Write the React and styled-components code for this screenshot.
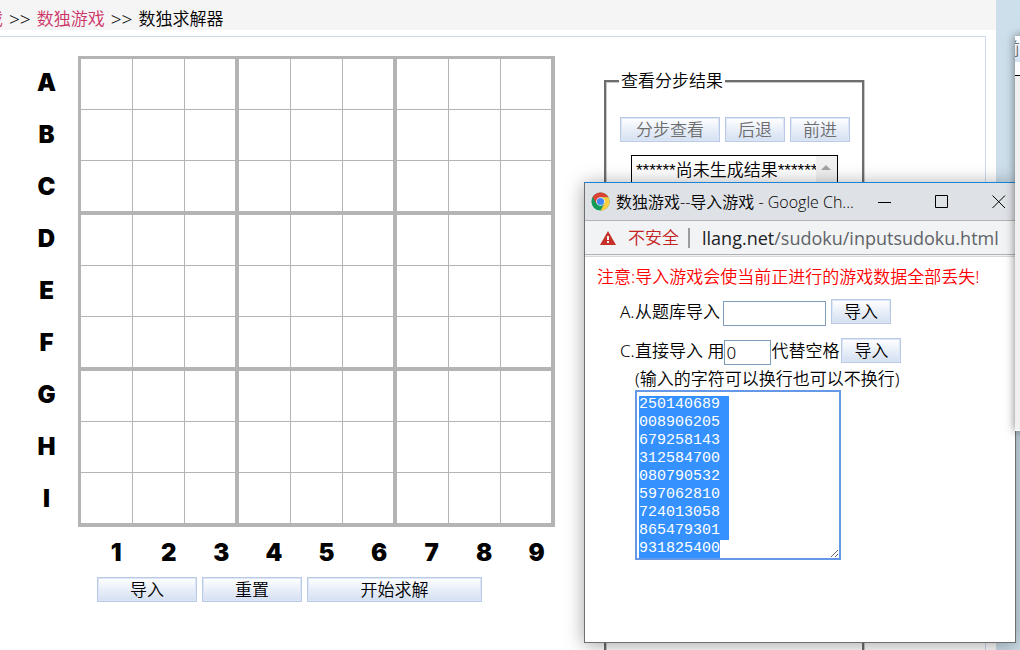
import React, { useEffect, useRef } from "react";
import styled, { createGlobalStyle } from "styled-components";

const GlobalStyle = createGlobalStyle`
  *, *::before, *::after { box-sizing: border-box; }
  html, body, #root { height: 100%; }
  body {
    margin: 0;
    overflow: hidden;
    background: #cddfeb;
    color: #000;
    font-family: "Noto Sans", "Noto Sans CJK SC", sans-serif;
    font-size: 17px;
    font-weight: 350;
    line-height: 24px;
  }
  button, input, select, textarea { font: inherit; color: inherit; border-radius: 0; }
`;

const Desktop = styled.div`
  position: relative;
  height: 100%;
  overflow: hidden;
`;

const Page = styled.div`
  display: flex;
  flex-direction: column;
  min-height: 100%;
  margin-right: 24px;
  background: #fff;
`;

const Breadcrumb = styled.nav`
  display: flex;
  align-items: center;
  gap: 6px;
  height: 30px;
  padding-top: 7px;
  margin-left: -31px;
  background: #f5f5f5;
  white-space: nowrap;
`;

const Crumb = styled.a`
  color: #cc3366;
  text-decoration: none;
`;

const Separator = styled.span`
  font-size: 19px;
`;

const Main = styled.main`
  display: flex;
  flex: 1;
  align-items: flex-start;
  gap: 49px;
  margin: 6px 10px 0 0;
  padding: 19px 0 0 15px;
  border: solid #ccd9ef;
  border-width: 1px 1px 0 0;
`;

const Board = styled.section`
  display: grid;
  grid-template-columns: 63px auto;
  flex: none;
`;

const RowLabels = styled.div`
  display: grid;
  grid-template-rows: repeat(9, 52px);
  align-items: center;
  padding-top: 1px;
  text-align: center;
  font: 900 24px/32px Inter, "Liberation Sans", sans-serif;
`;

const ColumnLabels = styled.div`
  display: grid;
  grid-column: 2;
  grid-template-columns: repeat(9, 1fr);
  margin: 10px -8px 0 12px;
  text-align: center;
  font: 900 24px/32px Inter, "Liberation Sans", sans-serif;
`;

const Grid = styled.table`
  align-self: start;
  border: solid #b4b4b4;
  border-width: 3px 0 0 3px;
  border-spacing: 0;
`;

const Cell = styled.td`
  padding: 0;
  border: solid #b4b4b4;
  border-width: 0 ${(p) => (p.$thickRight ? 4 : 1)}px ${(p) => (p.$thickBottom ? 4 : 1)}px 0;
`;

const CellInput = styled.input`
  display: block;
  width: ${(p) => (p.$narrow ? 50 : 51)}px;
  height: 50px;
  padding: 0;
  border: 0;
  outline: 0;
  background: #fff;
  text-align: center;
`;

const Button = styled.button`
  flex: none;
  width: ${(p) => p.$width || 60}px;
  height: 25px;
  padding: 0;
  border: 1px solid #b8cae6;
  box-shadow: inset 0 0 0 1px #dce6f5;
  background: linear-gradient(#fff, #d3dff2);
  line-height: 22px;
  &:disabled { color: #6d6d6d; }
`;

const ButtonBar = styled.div`
  display: flex;
  gap: 5px;
`;

const BoardActions = styled(ButtonBar)`
  grid-column: 2;
  margin: 8px 0 0 19px;
`;

const Steps = styled.fieldset`
  flex: none;
  width: 260px;
  height: 640px;
  margin: 13px 0 0;
  padding: 24px 0 0 14px;
  border: 2px solid #6d6d6d;
  box-shadow: inset 1px 1px 0 #c8c8c8, 1px 0 0 #c8c8c8;
  min-width: 0;
`;

const StepsLegend = styled.legend`
  margin-left: -1px;
  padding: 0 2px;
  background: #fff;
`;

const StepList = styled.div`
  display: flex;
  width: 207px;
  height: 420px;
  margin: 13px 0 0 11px;
  border: 1px solid #000;
`;

const StepSelect = styled.select`
  flex: 1;
  min-width: 0;
  padding: 0;
  border: 0;
  outline: 0;
  overflow: hidden;
  background: #fff;
  font-family: "Liberation Sans", "Noto Sans CJK SC", sans-serif;
  option {
    min-height: 20px;
    padding: 0 4px;
    font: inherit;
    line-height: 20px;
  }
`;

const ScrollTrack = styled.div`
  flex: none;
  width: 21px;
  padding: 9px 0 0 5px;
  background: #f0f0f0;
  &::before {
    content: "";
    display: block;
    width: 10px;
    border: solid transparent;
    border-width: 0 5px 5px;
    border-bottom-color: #a3a3a3;
  }
`;

const Popup = styled.section`
  position: absolute;
  left: 584px;
  top: 182px;
  width: 432px;
  height: 461px;
  border: 1px solid #6f6f6f;
  border-top-color: #1883d7;
  background: #fff;
  box-shadow: 0 2px 18px rgba(0, 0, 0, 0.36);
`;

const TitleBar = styled.header`
  display: flex;
  align-items: center;
  height: 38px;
  padding: 0 8px 0 6px;
  border-bottom: 1px solid #b0b2b6;
  background: #dee1e6;
  font-family: "Open Sans", "Noto Sans CJK SC", sans-serif;
  font-size: 16px;
`;

const WindowTitle = styled.span`
  flex: 1;
  margin-left: 6px;
  white-space: nowrap;
`;

const WindowControls = styled.div`
  display: flex;
  gap: 41px;
`;

const ControlButton = styled.button`
  display: block;
  width: 16px;
  height: 16px;
  padding: 0;
  border: 0;
  background: none;
  svg { display: block; }
`;

const AddressBar = styled.div`
  display: flex;
  align-items: center;
  height: 34px;
  padding: 0 0 0 15px;
  border-bottom: 1px solid #b0b2b6;
  background: #f1f3f4;
  box-shadow: 0 1px 0 #f1f3f4, 0 2px 0 #d5d7da;
  white-space: nowrap;
`;

const Insecure = styled.span`
  margin-left: 12px;
  padding-right: 9px;
  border-right: 2px solid #9a9c9f;
  color: #c5221f;
  line-height: 20px;
`;

const Url = styled.span`
  margin-left: 12px;
  color: #5f6368;
  font-family: "Open Sans", sans-serif;
  font-size: 18px;
  font-weight: 400;
`;

const Host = styled.span`
  color: #202124;
`;

const PopupBody = styled.form`
  padding: 10px 0 0 12px;
`;

const Warning = styled.p`
  margin: 0;
  color: #f00;
`;

const ImportRow = styled.div`
  display: flex;
  align-items: center;
  height: 25px;
  margin: ${(p) => p.$top}px 0 0 23px;
  white-space: nowrap;
`;

const Marker = styled.span`
  width: 15px;
`;

const FieldLabel = styled.label`
  margin-right: ${(p) => p.$gap || 0}px;
`;

const TextInput = styled.input`
  width: ${(p) => p.$width}px;
  height: 25px;
  margin: 4px ${(p) => p.$gap || 0}px 0 0;
  padding: 0 1px;
  border: 1px solid #7f9db9;
  outline: 0;
  background: #fff;
  line-height: 20px;
`;

const Hint = styled.label`
  display: block;
  margin: 4px 0 0 38px;
`;

const PuzzleText = styled.textarea`
  display: block;
  width: 206px;
  height: 170px;
  margin: -1px 0 0 38px;
  padding: 4px 2px;
  border: 2px solid #6598e6;
  outline: 0;
  overflow: hidden;
  resize: both;
  font: 400 15px/18px "Liberation Mono", monospace;
  &::selection { background: rgba(51, 144, 255, 0.99); color: #fff; }
`;

const SideWindow = styled.aside`
  position: absolute;
  left: 1015px;
  top: 36px;
  width: 240px;
  height: 395px;
  border: 1px solid #fff;
  border-width: 1px 1px 1px 0;
  background: #f0f0f0;
  box-shadow: 0 0 9px rgba(0, 0, 0, 0.5);
`;

const SideTab = styled.div`
  height: 25px;
  overflow: hidden;
  background: linear-gradient(#fff, #d3dff2);
  color: #6d6d6d;
  text-indent: -12px;
`;

const SideGap = styled.div`
  height: 14px;
  border-bottom: 1px solid #000;
  background: #fff;
`;

const PUZZLE = [
  "250140689",
  "008906205",
  "679258143",
  "312584700",
  "080790532",
  "597062810",
  "724013058",
  "865479301",
  "931825400",
].join("\n");

const ROWS = "ABCDEFGHI".split("");
const COLUMNS = [1, 2, 3, 4, 5, 6, 7, 8, 9];

function ChromeLogo() {
  return (
    <svg width="19" height="19" viewBox="0 0 48 48" aria-hidden="true">
      <circle cx="24" cy="24" r="23" fill="#0f9d58" />
      <path d="M4.1 12.5A23 23 0 0 1 43.9 13H24L14 29.8Z" fill="#db4437" />
      <path d="M44.2 13A23 23 0 0 1 24 47L34 29.8 24 13Z" fill="#ffcd40" />
      <circle cx="24" cy="24" r="11" fill="#f1f1f1" />
      <circle cx="24" cy="24" r="9" fill="#4285f4" />
    </svg>
  );
}

function WarningIcon() {
  return (
    <svg width="16" height="14" viewBox="0 0 16 14" aria-hidden="true">
      <path d="M8 0 16 14H0Z" fill="#c5302b" />
      <path d="M7 5h2v4H7zM7 10h2v2H7z" fill="#f1f3f4" />
    </svg>
  );
}

function ControlIcon({ d }) {
  return (
    <svg width="16" height="16" viewBox="0 0 16 16" fill="none" stroke="#000" aria-hidden="true">
      <path d={d} />
    </svg>
  );
}

function ImportWindow() {
  const puzzle = useRef(null);

  useEffect(() => {
    puzzle.current.focus({ preventScroll: true });
    puzzle.current.select();
  }, []);

  return (
    <Popup>
      <TitleBar>
        <ChromeLogo />
        <WindowTitle>数独游戏--导入游戏 - Google Ch...</WindowTitle>
        <WindowControls>
          <ControlButton type="button" aria-label="最小化"><ControlIcon d="M1 8.5h13" /></ControlButton>
          <ControlButton type="button" aria-label="最大化"><ControlIcon d="M1.5 1.5h12v12h-12z" /></ControlButton>
          <ControlButton type="button" aria-label="关闭"><ControlIcon d="M1.5 1.5 14 14M14 1.5 1.5 14" /></ControlButton>
        </WindowControls>
      </TitleBar>
      <AddressBar>
        <WarningIcon />
        <Insecure>不安全</Insecure>
        <Url><Host>llang.net</Host>/sudoku/inputsudoku.html</Url>
      </AddressBar>
      <PopupBody>
        <Warning>注意:导入游戏会使当前正进行的游戏数据全部丢失!</Warning>
        <ImportRow $top={10}>
          <Marker>A.</Marker>
          <FieldLabel htmlFor="library" $gap={3}>从题库导入</FieldLabel>
          <TextInput id="library" $width={103} $gap={5} />
          <Button type="button">导入</Button>
        </ImportRow>
        <ImportRow $top={14}>
          <Marker>C.</Marker>
          <FieldLabel htmlFor="blank">直接导入 用</FieldLabel>
          <TextInput id="blank" $width={47} defaultValue="0" />
          <FieldLabel htmlFor="blank" $gap={2}>代替空格</FieldLabel>
          <Button type="button">导入</Button>
        </ImportRow>
        <Hint htmlFor="puzzle">(输入的字符可以换行也可以不换行)</Hint>
        <PuzzleText id="puzzle" ref={puzzle} defaultValue={PUZZLE} spellCheck={false} />
      </PopupBody>
    </Popup>
  );
}

export default function App() {
  return (
    <>
      <GlobalStyle />
      <Desktop>
        <Page>
          <Breadcrumb>
            <Crumb href="#games">游戏</Crumb>
            <Separator>&gt;&gt;</Separator>
            <Crumb href="#sudoku">数独游戏</Crumb>
            <Separator>&gt;&gt;</Separator>
            <span>数独求解器</span>
          </Breadcrumb>
          <Main>
            <Board>
              <RowLabels>
                {ROWS.map((row) => <span key={row}>{row}</span>)}
              </RowLabels>
              <Grid>
                <tbody>
                  {ROWS.map((row, r) => (
                    <tr key={row}>
                      {COLUMNS.map((column) => (
                        <Cell key={column} $thickRight={column % 3 === 0} $thickBottom={r % 3 === 2}>
                          <CellInput $narrow={column % 3 === 0} maxLength={1} aria-label={row + column} />
                        </Cell>
                      ))}
                    </tr>
                  ))}
                </tbody>
              </Grid>
              <ColumnLabels>
                {COLUMNS.map((column) => <span key={column}>{column}</span>)}
              </ColumnLabels>
              <BoardActions>
                <Button type="button" $width={100}>导入</Button>
                <Button type="button" $width={100}>重置</Button>
                <Button type="button" $width={175}>开始求解</Button>
              </BoardActions>
            </Board>
            <Steps>
              <StepsLegend>查看分步结果</StepsLegend>
              <ButtonBar>
                <Button type="button" $width={100} disabled>分步查看</Button>
                <Button type="button" disabled>后退</Button>
                <Button type="button" disabled>前进</Button>
              </ButtonBar>
              <StepList>
                <StepSelect size={12} aria-label="查看分步结果">
                  <option>******尚未生成结果******</option>
                </StepSelect>
                <ScrollTrack />
              </StepList>
            </Steps>
          </Main>
        </Page>
        <ImportWindow />
        <SideWindow>
          <SideTab>前进</SideTab>
          <SideGap />
        </SideWindow>
      </Desktop>
    </>
  );
}
